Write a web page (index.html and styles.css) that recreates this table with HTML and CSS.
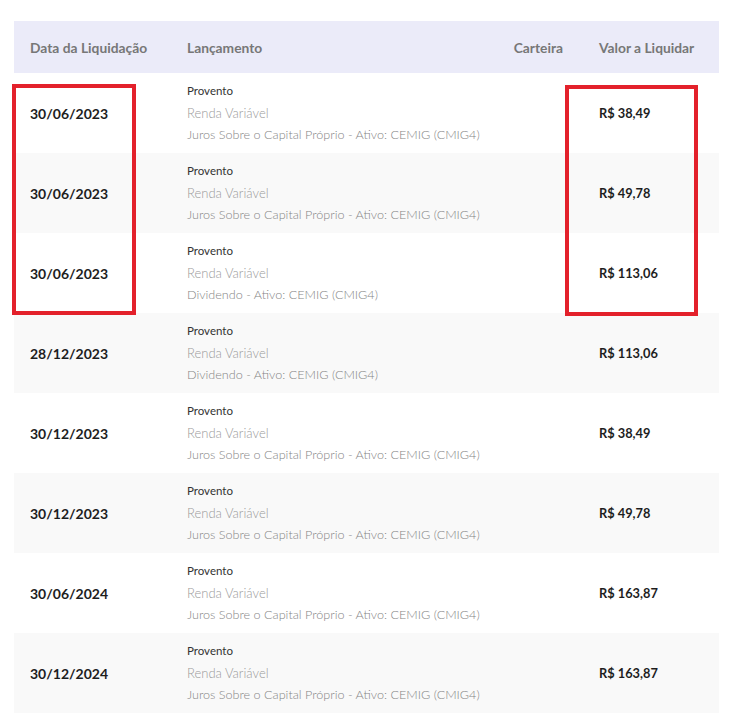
FILE: index.html
```html
<!DOCTYPE html>
<html lang="pt-BR">
<head>
<meta charset="utf-8">
<link rel="stylesheet" href="styles.css">
</head>
<body>
<div class="page">
  <div class="table">
    <div class="row head">
      <div class="c1">Data da Liquidação</div>
      <div class="c2">Lançamento</div>
      <div class="c3">Carteira</div>
      <div class="c4">Valor a Liquidar</div>
    </div>
    <div class="row">
      <div class="c1 date">30/06/2023</div>
      <div class="c2 desc"><span class="t1">Provento</span><span class="t2">Renda Variável</span><span class="t3">Juros Sobre o Capital Próprio - Ativo: CEMIG (CMIG4)</span></div>
      <div class="c3"></div>
      <div class="c4 val">R$ 38,49</div>
    </div>
    <div class="row alt">
      <div class="c1 date">30/06/2023</div>
      <div class="c2 desc"><span class="t1">Provento</span><span class="t2">Renda Variável</span><span class="t3">Juros Sobre o Capital Próprio - Ativo: CEMIG (CMIG4)</span></div>
      <div class="c3"></div>
      <div class="c4 val">R$ 49,78</div>
    </div>
    <div class="row">
      <div class="c1 date">30/06/2023</div>
      <div class="c2 desc"><span class="t1">Provento</span><span class="t2">Renda Variável</span><span class="t3">Dividendo - Ativo: CEMIG (CMIG4)</span></div>
      <div class="c3"></div>
      <div class="c4 val">R$ 113,06</div>
    </div>
    <div class="row alt">
      <div class="c1 date">28/12/2023</div>
      <div class="c2 desc"><span class="t1">Provento</span><span class="t2">Renda Variável</span><span class="t3">Dividendo - Ativo: CEMIG (CMIG4)</span></div>
      <div class="c3"></div>
      <div class="c4 val">R$ 113,06</div>
    </div>
    <div class="row">
      <div class="c1 date">30/12/2023</div>
      <div class="c2 desc"><span class="t1">Provento</span><span class="t2">Renda Variável</span><span class="t3">Juros Sobre o Capital Próprio - Ativo: CEMIG (CMIG4)</span></div>
      <div class="c3"></div>
      <div class="c4 val">R$ 38,49</div>
    </div>
    <div class="row alt">
      <div class="c1 date">30/12/2023</div>
      <div class="c2 desc"><span class="t1">Provento</span><span class="t2">Renda Variável</span><span class="t3">Juros Sobre o Capital Próprio - Ativo: CEMIG (CMIG4)</span></div>
      <div class="c3"></div>
      <div class="c4 val">R$ 49,78</div>
    </div>
    <div class="row">
      <div class="c1 date">30/06/2024</div>
      <div class="c2 desc"><span class="t1">Provento</span><span class="t2">Renda Variável</span><span class="t3">Juros Sobre o Capital Próprio - Ativo: CEMIG (CMIG4)</span></div>
      <div class="c3"></div>
      <div class="c4 val">R$ 163,87</div>
    </div>
    <div class="row alt">
      <div class="c1 date">30/12/2024</div>
      <div class="c2 desc"><span class="t1">Provento</span><span class="t2">Renda Variável</span><span class="t3">Juros Sobre o Capital Próprio - Ativo: CEMIG (CMIG4)</span></div>
      <div class="c3"></div>
      <div class="c4 val">R$ 163,87</div>
    </div>
    <div class="mark mark-left"></div>
    <div class="mark mark-right"></div>
  </div>
</div>
</body>
</html>
```
FILE: styles.css
```css
html, body {
  margin: 0;
  background: #ffffff;
}
.page {
  padding: 21px 13px 0 14px;
  font-family: Lato, "Open Sans", sans-serif;
}
.table {
  position: relative;
}
.row {
  display: grid;
  grid-template-columns: 157px 327px 85px 136px;
  height: 80px;
  align-items: center;
  background: #ffffff;
}
.row.alt {
  background: #f9f9f9;
}
.row > div {
  padding-left: 16px;
}
.row.head {
  height: 52px;
  background: #ebebf9;
  color: #777777;
  font-weight: 700;
  font-size: 13.8px;
}
.row.head .c3 {
  text-align: right;
  padding-right: 20px;
  padding-left: 0;
}
.date {
  font-weight: 700;
  font-size: 14px;
  color: #1e1e1e;
}
.val {
  font-weight: 700;
  font-size: 12.8px;
  color: #1e1e1e;
}
.desc {
  display: flex;
  flex-direction: column;
  line-height: 22px;
  padding-bottom: 1px;
}
.t1 {
  font-size: 11.5px;
  color: #333333;
}
.t2 {
  font-size: 13px;
  font-weight: 300;
  color: #9a9a9a;
}
.t3 {
  font-size: 12.6px;
  font-weight: 300;
  color: #858585;
}
.mark {
  position: absolute;
  border: 4px solid #e3212b;
  box-sizing: border-box;
}
.mark-left {
  left: -2px;
  top: 63px;
  width: 124px;
  height: 231px;
}
.mark-right {
  left: 551px;
  top: 64px;
  width: 133px;
  height: 231px;
}
```
